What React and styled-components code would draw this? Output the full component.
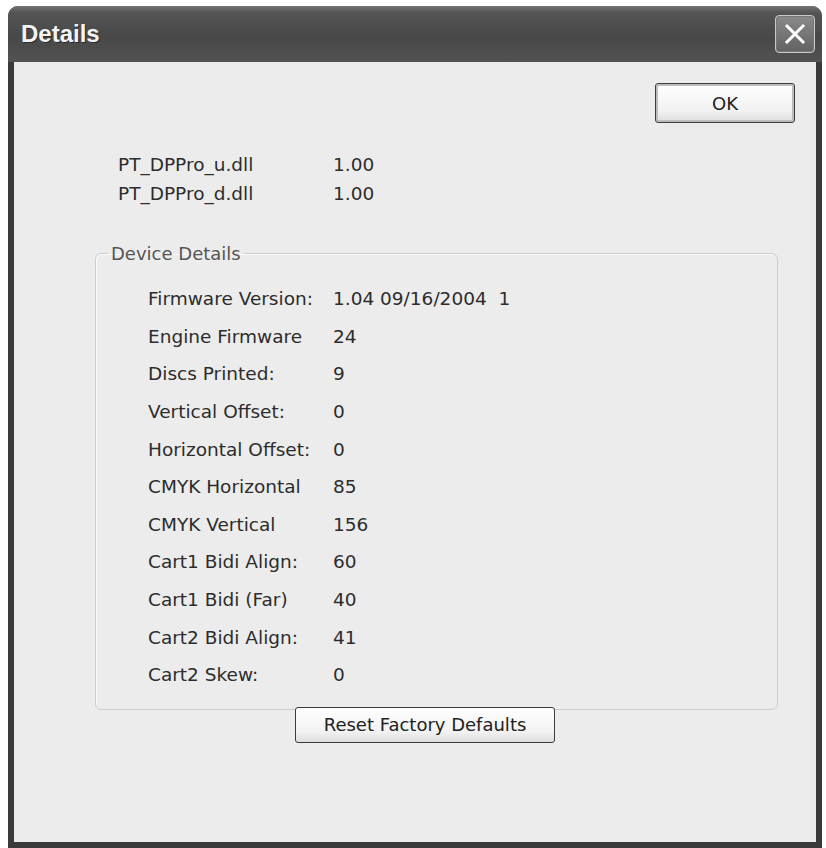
import React from "react";
import styled, { createGlobalStyle } from "styled-components";

const GlobalStyle = createGlobalStyle`
  html, body {
    margin: 0;
    padding: 0;
    background: #ffffff;
  }
  body {
    font-family: "DejaVu Sans", Tahoma, sans-serif;
  }
`;

const Window = styled.div`
  margin: 6px 0 0 8px;
  width: 814px;
  height: 842px;
  display: flex;
  flex-direction: column;
  background: #3a3a3a;
  border-radius: 10px 10px 0 0;
  box-sizing: border-box;
`;

const TitleBar = styled.div`
  height: 56px;
  display: flex;
  align-items: center;
  justify-content: space-between;
  padding: 0 7px 0 13px;
  border-radius: 10px 10px 0 0;
  background: linear-gradient(#747474 0, #545454 12%, #484848 55%, #525252 100%);
`;

const Title = styled.span`
  font-family: "Liberation Sans", Arial, sans-serif;
  font-weight: 700;
  font-size: 24px;
  color: #f4f4f4;
  text-shadow: 1px 1px 0 #2a2a2a;
`;

const CloseButton = styled.div`
  width: 38px;
  height: 36px;
  display: flex;
  align-items: center;
  justify-content: center;
  border: 1px solid #c9c9c9;
  border-radius: 4px;
  background: linear-gradient(#8a8a8a, #626262);
  box-shadow: inset 0 0 0 1px #777;
`;

const Client = styled.div`
  flex: 1;
  margin: 0 6px 6px 6px;
  background: #ececec;
  display: flex;
  flex-direction: column;
  padding: 21px 21px 0 0;
  box-sizing: border-box;
  color: #2c2c2c;
  font-size: 18.5px;
`;

const TopRow = styled.div`
  display: flex;
  justify-content: flex-end;
`;

const Button = styled.button`
  font-family: "DejaVu Sans", Tahoma, sans-serif;
  font-size: 18px;
  color: #222;
  width: ${(p) => p.$w}px;
  height: ${(p) => p.$h}px;
  border: 1px solid #3c3c3c;
  border-radius: 3px;
  background: linear-gradient(#ffffff, #f2f2f2 70%, #dddddd);
  box-shadow: ${(p) => (p.$default ? "inset 0 0 0 2px #bdbdbd" : "none")};
  padding: 0;
`;

const DllGrid = styled.div`
  display: grid;
  grid-template-columns: 215px auto;
  grid-auto-rows: 29px;
  align-items: center;
  margin: 27px 0 0 104px;
`;

const Group = styled.fieldset`
  margin: 35px 0 0 81px;
  width: 683px;
  box-sizing: border-box;
  border: 1px solid #cdcdcd;
  border-radius: 6px;
  padding: 16px 0 15px 52px;
  box-shadow: inset 1px 1px 0 #fafafa;
`;

const Legend = styled.legend`
  color: #555;
  padding: 0 3px;
  margin-left: -40px;
  font-size: 18px;
`;

const Row = styled.div`
  display: grid;
  grid-template-columns: 185px auto;
  height: 37.6px;
  align-items: center;
`;

const ButtonRow = styled.div`
  margin: -3px 0 0 281px;
`;

const dlls = [
  ["PT_DPPro_u.dll", "1.00"],
  ["PT_DPPro_d.dll", "1.00"],
];

const details = [
  ["Firmware Version:", "1.04 09/16/2004  1"],
  ["Engine Firmware", "24"],
  ["Discs Printed:", "9"],
  ["Vertical Offset:", "0"],
  ["Horizontal Offset:", "0"],
  ["CMYK Horizontal", "85"],
  ["CMYK Vertical", "156"],
  ["Cart1 Bidi Align:", "60"],
  ["Cart1 Bidi (Far)", "40"],
  ["Cart2 Bidi Align:", "41"],
  ["Cart2 Skew:", "0"],
];

export default function App() {
  return (
    <>
      <GlobalStyle />
      <Window>
        <TitleBar>
          <Title>Details</Title>
          <CloseButton>
            <svg width="24" height="24" viewBox="0 0 24 24">
              <path d="M4 4 L20 20 M20 4 L4 20" stroke="#fff" strokeWidth="3" strokeLinecap="square" />
            </svg>
          </CloseButton>
        </TitleBar>
        <Client>
          <TopRow>
            <Button $w={140} $h={40} $default>OK</Button>
          </TopRow>
          <DllGrid>
            {dlls.map(([k, v]) => (
              <React.Fragment key={k}>
                <span>{k}</span>
                <span>{v}</span>
              </React.Fragment>
            ))}
          </DllGrid>
          <Group>
            <Legend>Device Details</Legend>
            {details.map(([k, v]) => (
              <Row key={k}>
                <span>{k}</span>
                <span style={{ whiteSpace: "pre" }}>{v}</span>
              </Row>
            ))}
          </Group>
          <ButtonRow>
            <Button $w={260} $h={36}>Reset Factory Defaults</Button>
          </ButtonRow>
        </Client>
      </Window>
    </>
  );
}
